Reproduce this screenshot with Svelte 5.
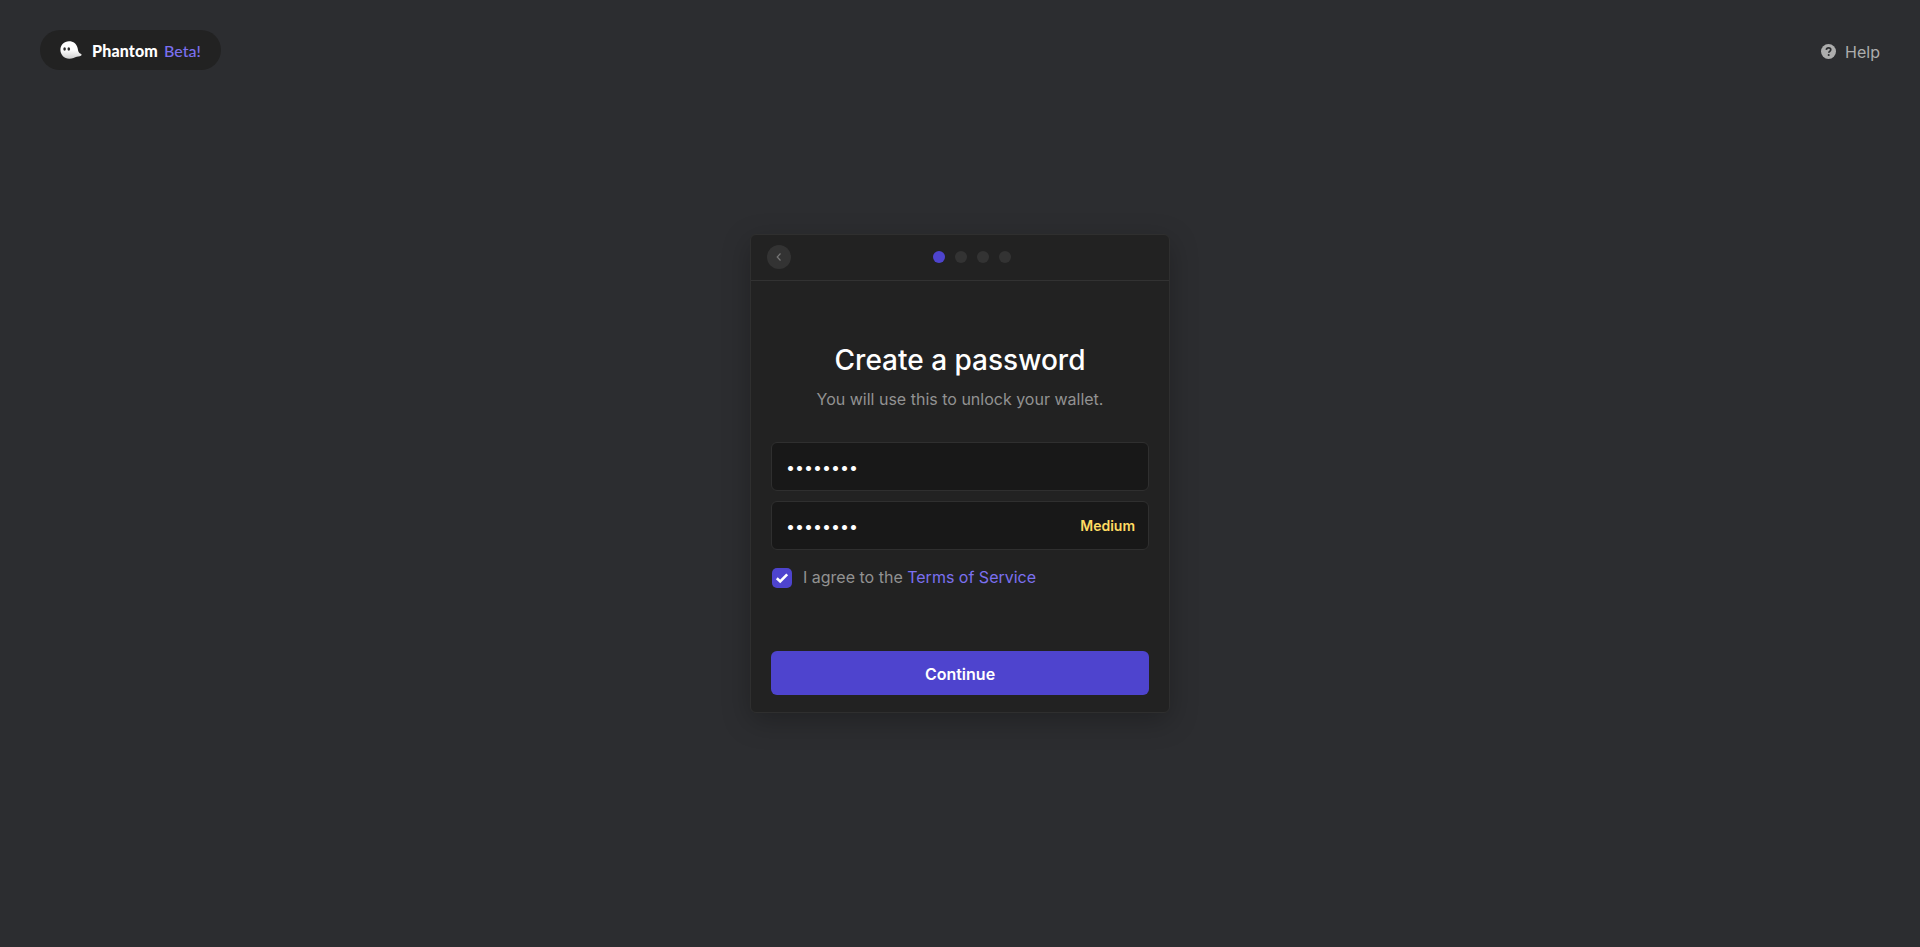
<script lang="ts">
	let password = $state('password');
	let confirmPassword = $state('password');
	let agreed = $state(true);

	const steps = [0, 1, 2, 3];
	const currentStep = 0;
</script>

<div class="page">
	<header class="top-bar">
		<a class="brand" href="#home">
			<svg class="ghost" width="22" height="18" viewBox="0 0 22 18" aria-hidden="true">
				<defs>
					<linearGradient id="ghost-fill" x1="0" y1="0" x2="0" y2="1">
						<stop offset="0.5" stop-color="#ffffff" />
						<stop offset="1" stop-color="#d0d0d0" />
					</linearGradient>
				</defs>
				<path
					d="M9 .3C4 .3.4 4 .4 8.800c0 5.200 3.900 8.900 8.800 8.900 3.400 0 5.600-1.300 7.600-2 1.800-.5 4.500-.3 4.800-1.700.2-1-1.400-1.200-2.400-2.200-1.100-1.200-1.100-2.800-1.600-4.800C16.600 3 13.500.300 9 .300z"
					fill="url(#ghost-fill)"
				/>
				<ellipse cx="4.600" cy="8" rx="1.300" ry="1.800" fill="#2a2a2a" />
				<ellipse cx="8.800" cy="8" rx="1.300" ry="1.800" fill="#2a2a2a" />
			</svg>
			<span class="brand-name">Phantom</span>
			<span class="brand-beta">Beta!</span>
		</a>

		<a class="help" href="#help">
			<svg width="15" height="15" viewBox="0 0 16 16" aria-hidden="true">
				<circle cx="8" cy="8" r="8" fill="#adadad" />
				<path
					d="M5.700 6.200C5.800 4.900 6.800 4.200 8.100 4.200c1.300 0 2.300.8 2.300 2 0 1-.6 1.400-1.200 1.800-.6.400-.9.700-.9 1.400"
					fill="none"
					stroke="#2c2d30"
					stroke-width="1.800"
				/>
				<circle cx="8.200" cy="11.800" r="1.100" fill="#2c2d30" />
			</svg>
			Help
		</a>
	</header>

	<main class="card">
		<div class="card-header">
			<button class="back" type="button" aria-label="Back">
				<svg width="8" height="10" viewBox="0 0 8 10" aria-hidden="true">
					<path d="M5.500 1.500 2.200 5l3.300 3.500" fill="none" stroke="#777" stroke-width="1.200" />
				</svg>
			</button>
			<div class="steps">
				{#each steps as step}
					<span class="step" class:active={step === currentStep}></span>
				{/each}
			</div>
		</div>

		<form class="card-body" onsubmit={(event) => event.preventDefault()}>
			<h1>Create a password</h1>
			<p class="subtitle">You will use this to unlock your wallet.</p>

			<div class="field">
				<input type="password" aria-label="Password" bind:value={password} />
			</div>
			<div class="field">
				<input type="password" aria-label="Confirm password" bind:value={confirmPassword} />
				<span class="strength">Medium</span>
			</div>

			<label class="agree">
				<input class="agree-input" type="checkbox" bind:checked={agreed} />
				<span class="checkbox" class:checked={agreed}>
					{#if agreed}
						<svg width="14" height="12" viewBox="0 0 14 12" aria-hidden="true">
							<path d="M1.800 6.300 5.200 9.500 12.200 2.300" fill="none" stroke="#fff" stroke-width="2.600" />
						</svg>
					{/if}
				</span>
				<span class="agree-text">I agree to the <a href="#terms">Terms of Service</a></span>
			</label>

			<button class="continue" type="submit">Continue</button>
		</form>
	</main>
</div>

<style>
	:global(body) {
		background-color: #2c2d30;
	}

	.page {
		display: grid;
		grid-template-rows: 1fr auto 1fr;
		justify-items: center;
		min-height: 100vh;
		font-family: Inter, 'Liberation Sans', sans-serif;
		color: #fff;
	}

	.top-bar {
		display: flex;
		align-items: flex-start;
		justify-content: space-between;
		align-self: start;
		width: 100%;
		padding: 30px 40px 0;
		box-sizing: border-box;
	}

	.brand {
		display: flex;
		align-items: center;
		height: 40px;
		padding: 0 20px;
		border-radius: 20px;
		background-color: #222;
		text-decoration: none;
		font-family: Lato, Inter, sans-serif;
		font-size: 16px;
		line-height: 17px;
	}

	.ghost {
		margin-right: 10px;
	}

	.brand-name {
		font-weight: 900;
		letter-spacing: 0.15px;
		color: #fff;
		margin-right: 6px;
	}

	.brand-beta {
		color: #7b70f0;
		font-weight: 500;
	}

	.help {
		display: flex;
		align-items: center;
		gap: 9px;
		height: 19px;
		margin-top: 12px;
		color: #adadad;
		font-size: 16px;
		text-decoration: none;
	}

	.card {
		grid-row: 2;
		display: flex;
		flex-direction: column;
		width: 420px;
		height: 479px;
		box-sizing: border-box;
		background-color: #222;
		border: 1px solid #2f2f2f;
		border-radius: 6px;
		box-shadow: 0 8px 28px rgba(0, 0, 0, 0.25);
	}

	.card-header {
		display: flex;
		align-items: center;
		flex-shrink: 0;
		height: 46px;
		box-sizing: border-box;
		padding: 0 0 1px 16px;
		border-bottom: 1px solid #323232;
	}

	.back {
		display: flex;
		align-items: center;
		justify-content: center;
		width: 24px;
		height: 24px;
		padding: 0;
		border: none;
		border-radius: 50%;
		background-color: #333;
	}

	/* the dots sit to the right of the card's centre */
	.steps {
		display: flex;
		gap: 10px;
		margin-left: 142px;
	}

	.step {
		width: 12px;
		height: 12px;
		border-radius: 50%;
		background-color: #333;
	}

	.step.active {
		background-color: #4e44ce;
	}

	.card-body {
		flex: 1;
		display: flex;
		flex-direction: column;
		padding: 0 20px 17px;
	}

	h1 {
		margin: 62px 0 0;
		font-size: 28px;
		line-height: 34px;
		font-weight: 500;
		text-align: center;
	}

	.subtitle {
		margin: 13px 0 33px;
		font-size: 16px;
		line-height: 19px;
		color: #929292;
		text-align: center;
	}

	.field {
		display: flex;
		align-items: center;
		height: 49px;
		margin-bottom: 10px;
		padding: 0 13px 0 14px;
		box-sizing: border-box;
		background-color: #181818;
		border: 1px solid #2f2f2f;
		border-radius: 6px;
	}

	.field input {
		flex: 1;
		min-width: 0;
		padding: 0;
		border: none;
		outline: none;
		background: none;
		color: #fff;
		font-family: inherit;
		font-size: 16px;
	}

	.strength {
		color: #ffdc62;
		font-size: 14px;
		font-weight: 600;
	}

	.agree {
		position: relative;
		display: flex;
		align-items: center;
		gap: 11px;
		margin-top: 7px;
		color: #929292;
		font-size: 16px;
		line-height: 20px;
	}

	.agree-text {
		padding-bottom: 2px;
	}

	.agree-input {
		position: absolute;
		opacity: 0;
		width: 0;
		height: 0;
	}

	.checkbox {
		display: flex;
		align-items: center;
		justify-content: center;
		width: 20px;
		height: 20px;
		margin-left: 1px;
		border-radius: 5px;
		background-color: #181818;
	}

	.checkbox.checked {
		background-color: #4e44ce;
	}

	.agree a {
		color: #7b70f0;
		text-decoration: none;
	}

	.continue {
		margin-top: auto;
		height: 44px;
		padding: 2px 0 0;
		border: none;
		border-radius: 6px;
		background-color: #4e44ce;
		color: #fff;
		font-family: inherit;
		font-size: 16px;
		font-weight: 600;
	}
</style>
